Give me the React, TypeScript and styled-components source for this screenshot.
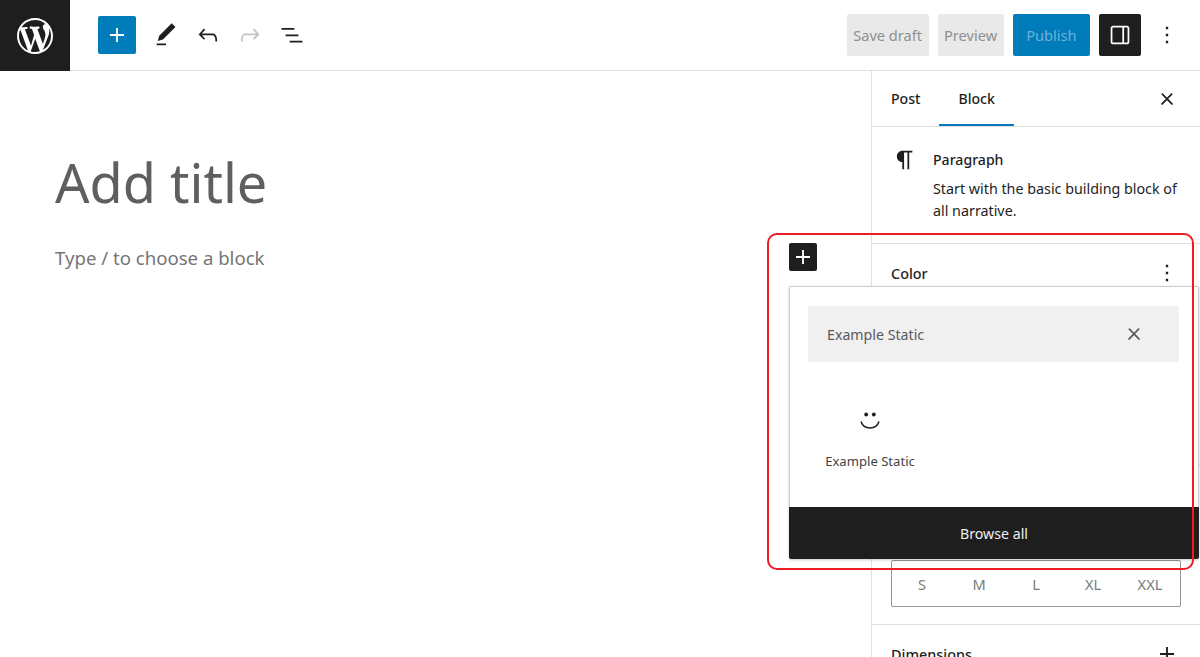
import styled, { createGlobalStyle } from "styled-components";

const GlobalStyle = createGlobalStyle`
  html, body {
    margin: 0;
    height: 100%;
    background: #fff;
  }
  body {
    font-family: "Noto Sans", "Open Sans", sans-serif;
    color: #1e1e1e;
    overflow: hidden;
  }
  * {
    box-sizing: border-box;
  }
`;

const Page = styled.div`
  position: relative;
  width: 1200px;
  height: 657px;
  overflow: hidden;
`;

const Header = styled.header`
  display: flex;
  align-items: center;
  height: 71px;
  border-bottom: 1px solid #e0e0e0;
`;

const Logo = styled.div`
  display: flex;
  align-items: center;
  justify-content: center;
  width: 70px;
  height: 71px;
  background: #1e1e1e;
  color: #fff;
  margin-bottom: -1px;
`;

const LeftTools = styled.div`
  display: flex;
  align-items: center;
  margin-left: 28px;
`;

const InserterButton = styled.div`
  display: flex;
  align-items: center;
  justify-content: center;
  width: 38px;
  height: 38px;
  margin-right: 9px;
  border-radius: 2px;
  background: #007cba;
  color: #fff;
`;

const ToolIcon = styled.div<{ $muted?: boolean }>`
  display: flex;
  align-items: center;
  justify-content: center;
  width: 42px;
  height: 42px;
  color: ${(p) => (p.$muted ? "#c4c4c4" : "#1e1e1e")};
`;

const RightTools = styled.div`
  display: flex;
  align-items: center;
  gap: 9px;
  margin-left: auto;
  padding-right: 19px;
`;

const ActionButton = styled.div<{ $primary?: boolean }>`
  display: flex;
  align-items: center;
  height: 42px;
  padding: 0 6.5px;
  border-radius: 2px;
  font-size: 14.6px;
  white-space: nowrap;
  background: ${(p) => (p.$primary ? "#007cba" : "#e9e9e9")};
  color: ${(p) => (p.$primary ? "#6eb1d8" : "#8f8f8f")};
`;

const PublishButton = styled(ActionButton)`
  padding: 0 13.5px;
`;

const SidebarToggle = styled.div`
  display: flex;
  align-items: center;
  justify-content: center;
  width: 42px;
  height: 42px;
  border-radius: 2px;
  background: #1e1e1e;
  color: #fff;
`;

const MoreButton = styled.div`
  display: flex;
  margin-left: 3px;
`;

const Body = styled.div`
  display: flex;
  height: 586px;
`;

const Editor = styled.main`
  flex: 1;
  padding: 78px 0 0 55px;
`;

const Title = styled.h1`
  margin: 0;
  height: 66px;
  font-size: 54px;
  line-height: 66px;
  font-weight: 400;
  color: #5f5f5f;
`;

const Placeholder = styled.p`
  margin: 30px 0 0;
  font-size: 18.6px;
  line-height: 26px;
  color: #757575;
`;

const Sidebar = styled.aside`
  width: 329px;
  border-left: 1px solid #e0e0e0;
`;

const Tabs = styled.div`
  display: flex;
  align-items: stretch;
  height: 56px;
  padding: 0 24px 0 19px;
  border-bottom: 1px solid #e0e0e0;
`;

const Tab = styled.div<{ $active?: boolean }>`
  display: flex;
  align-items: center;
  margin-right: ${(p) => (p.$active ? "0" : "18.5px")};
  padding: 0 ${(p) => (p.$active ? "19.5px" : "0")};
  font-size: 14.1px;
  font-weight: 500;
  box-shadow: ${(p) => (p.$active ? "inset 0 -2px 0 #007cba" : "none")};
`;

const TabClose = styled.div`
  display: flex;
  align-items: center;
  margin-left: auto;
`;

const BlockCard = styled.section`
  display: flex;
  height: 117px;
  padding: 22px 19px 0 19px;
  border-bottom: 1px solid #e0e0e0;
`;

const BlockIcon = styled.div`
  width: 42px;
  flex: none;
  margin-top: -3px;
`;

const BlockName = styled.div`
  font-size: 14.1px;
  font-weight: 500;
  line-height: 21px;
  margin-bottom: 8px;
`;

const BlockText = styled.div`
  font-size: 14.3px;
  line-height: 22px;
  white-space: nowrap;
`;

const Panel = styled.section<{ $height: number }>`
  height: ${(p) => p.$height}px;
  padding: 17px 19px;
  border-bottom: 1px solid #e0e0e0;
`;

const PanelHeader = styled.div`
  display: flex;
  align-items: center;
  justify-content: space-between;
  height: 24px;
  font-size: 14.4px;
  font-weight: 500;
`;

const SizeField = styled.div`
  display: grid;
  grid-template-columns: repeat(5, 57px);
  align-items: center;
  justify-items: center;
  height: 47px;
  margin-top: 54px;
  padding: 0 1.5px;
  border: 1px solid #949494;
  border-radius: 2px;
  font-size: 14.6px;
  color: #7a7a7a;
`;

const Inserter = styled.button`
  position: absolute;
  left: 789px;
  top: 243px;
  display: flex;
  align-items: center;
  justify-content: center;
  width: 28px;
  height: 28px;
  padding: 0;
  border: 0;
  border-radius: 2px;
  background: #1e1e1e;
  color: #fff;
`;

const Popover = styled.div`
  position: absolute;
  left: 789px;
  top: 286px;
  display: flex;
  flex-direction: column;
  width: 410px;
  height: 273px;
  border-radius: 2px;
  background: #fff;
  box-shadow: inset 0 0 0 1px #ccc, 0 1px 3px rgba(0, 0, 0, 0.2);
`;

const SearchBox = styled.div`
  display: flex;
  align-items: center;
  justify-content: space-between;
  height: 56px;
  margin: 20px 20px 0 19px;
  padding: 0 36px 0 19px;
  border-radius: 2px;
  background: #f0f0f0;
  font-size: 14.2px;
  color: #5a5a5a;
`;

const BlockItem = styled.div`
  display: flex;
  flex-direction: column;
  align-items: center;
  width: 122px;
  margin: 46px 0 0 20px;
  color: #444;
  font-size: 13.1px;
`;

const ItemLabel = styled.span`
  margin-top: 16px;
  white-space: nowrap;
`;

const BrowseAll = styled.div`
  display: flex;
  align-items: center;
  justify-content: center;
  height: 52px;
  margin-top: auto;
  border-radius: 0 0 2px 2px;
  background: #1e1e1e;
  color: #f0f0f0;
  font-size: 14.2px;
`;

const Highlight = styled.div`
  position: absolute;
  left: 767px;
  top: 233px;
  width: 427px;
  height: 337px;
  border: 2.5px solid #ed1c24;
  border-radius: 10px;
  pointer-events: none;
`;

const CloseIcon = styled.svg`
  stroke: currentColor;
  stroke-width: 1.1;
`;

const Icon = ({ d, size = 28 }: { d: string; size?: number }) => (
  <svg width={size} height={size} viewBox="0 0 24 24" fill="currentColor">
    <path fillRule="evenodd" d={d} />
  </svg>
);

const plus = "M18 11.2h-5.2V6h-1.6v5.2H6v1.6h5.2V18h1.6v-5.2H18z";
const pencil = "M20.1 5.1L16.9 2 6.2 12.7l-1.3 4.4 4.5-1.3L20.1 5.1zM4 20.8h8v-1.5H4v1.5z";
const undo =
  "M18.3 11.7c-.6-.6-1.4-.9-2.3-.9H6.7l2.9-3.3-1.1-1-4.5 5L8.5 16l1-1-2.7-2.7H16c.5 0 .9.2 1.3.5 1 1 1 3.4 1 4.5v.3h1.5v-.2c0-1.5 0-4.3-1.5-5.7z";
const redo =
  "M15.6 6.5l-1.1 1 2.9 3.3H8c-.9 0-1.7.3-2.3.9-1.4 1.5-1.4 4.2-1.4 5.6v.2h1.5v-.3c0-1.1 0-3.5 1-4.5.3-.3.7-.5 1.3-.5h9.2L14.5 15l1.1 1.1 4.6-4.6-4.6-5z";
const listView = "M3 6h11v1.5H3V6zm3.5 5.5h11V13h-11v-1.5zM21 17H10v1.5h11V17z";
const drawer =
  "M18 4H6c-1.1 0-2 .9-2 2v12c0 1.1.9 2 2 2h12c1.1 0 2-.9 2-2V6c0-1.1-.9-2-2-2zM5.5 18V6c0-.3.2-.5.5-.5h8v13H6c-.3 0-.5-.2-.5-.5zm13 0c0 .3-.2.5-.5.5h-2.5v-13H18c.3 0 .5.2.5.5v12z";
const more = "M13 19h-2v-2h2v2zm0-6h-2v-2h2v2zm0-6h-2V5h2v2z";
const close =
  "M13 11.8l6.1-6.3-1-1-6.1 6.2-6.1-6.2-1 1 6.1 6.3-6.5 6.7 1 1 6.5-6.6 6.5 6.6 1-1z";
const paragraph =
  "M18.3 4H9.9v-.1l-.9.2c-2.3.4-4 2.4-4 4.8s1.7 4.4 4 4.8l.7.1V20h1.5V5.5h2.9V20h1.5V5.5h2.7V4z";
const wordpress =
  "M20 10c0-5.51-4.49-10-10-10C4.48 0 0 4.49 0 10c0 5.52 4.48 10 10 10 5.51 0 10-4.48 10-10zM7.78 15.37L4.37 6.22c.55-.02 1.17-.08 1.17-.08.5-.06.44-1.13-.06-1.11 0 0-1.45.11-2.37.11-.18 0-.37 0-.58-.01C4.12 2.69 6.91 1.11 10 1.11c2.3 0 4.39.87 5.97 2.3-.67-.11-1.62.39-1.62 1.54 0 .71.43 1.31.87 2.02.35.61.55 1.36.55 2.46 0 1.49-1.4 5-1.4 5l-3.03-8.35c.54-.02.82-.17.82-.17.5-.05.44-1.25-.06-1.22 0 0-1.44.12-2.38.12-.87 0-2.33-.12-2.33-.12-.5-.03-.56 1.2-.06 1.22l.92.08 1.26 3.41zM17.41 10c.24-.64.74-1.87.43-4.25.7 1.29 1.05 2.71 1.05 4.25 0 3.29-1.73 6.24-4.48 7.78 1-2.67 2-5.36 3-7.78zM6.1 18.09C3.12 16.65 1.11 13.53 1.11 10c0-1.3.23-2.48.72-3.59C3.25 10.3 4.67 14.2 6.1 18.09zm4.03-6.63l2.58 6.98c-.86.29-1.74.45-2.71.45-.82 0-1.61-.11-2.37-.34.84-2.4 1.68-4.78 2.5-7.09z";

const Close = () => (
  <CloseIcon width="18" height="18" viewBox="0 0 24 24" fill="currentColor">
    <path d={close} />
  </CloseIcon>
);

const Smile = () => (
  <svg width="28" height="28" viewBox="0 0 28 28" fill="none">
    <circle cx="10.2" cy="6.5" r="1.9" fill="#1e1e1e" />
    <circle cx="17.8" cy="6.5" r="1.9" fill="#1e1e1e" />
    <path
      d="M5 13.5c1.3 4 4.8 6.500 9 6.500s7.700-2.500 9-6.500"
      stroke="#1e1e1e"
      strokeWidth="1.5"
    />
  </svg>
);

const sizes = ["S", "M", "L", "XL", "XXL"];

const App = () => (
  <Page>
    <GlobalStyle />
    <Header>
      <Logo>
        <svg width="36" height="36" viewBox="0 0 20 20" fill="currentColor">
          <path d={wordpress} />
        </svg>
      </Logo>
      <LeftTools>
        <InserterButton>
          <Icon d={plus} />
        </InserterButton>
        <ToolIcon>
          <Icon d={pencil} />
        </ToolIcon>
        <ToolIcon>
          <Icon d={undo} />
        </ToolIcon>
        <ToolIcon $muted>
          <Icon d={redo} />
        </ToolIcon>
        <ToolIcon>
          <Icon d={listView} />
        </ToolIcon>
      </LeftTools>
      <RightTools>
        <ActionButton>Save draft</ActionButton>
        <ActionButton>Preview</ActionButton>
        <PublishButton $primary>Publish</PublishButton>
        <SidebarToggle>
          <Icon d={drawer} />
        </SidebarToggle>
        <MoreButton>
          <Icon d={more} />
        </MoreButton>
      </RightTools>
    </Header>
    <Body>
      <Editor>
        <Title>Add title</Title>
        <Placeholder>Type / to choose a block</Placeholder>
      </Editor>
      <Sidebar>
        <Tabs>
          <Tab>Post</Tab>
          <Tab $active>Block</Tab>
          <TabClose>
            <Close />
          </TabClose>
        </Tabs>
        <BlockCard>
          <BlockIcon>
            <Icon d={paragraph} />
          </BlockIcon>
          <div>
            <BlockName>Paragraph</BlockName>
            <BlockText>
              Start with the basic building block of
              <br />
              all narrative.
            </BlockText>
          </div>
        </BlockCard>
        <Panel $height={221}>
          <PanelHeader>
            Color
            <Icon d={more} />
          </PanelHeader>
        </Panel>
        <Panel $height={160}>
          <PanelHeader>Typography</PanelHeader>
          <SizeField>
            {sizes.map((size) => (
              <span key={size}>{size}</span>
            ))}
          </SizeField>
        </Panel>
        <Panel $height={60}>
          <PanelHeader>
            Dimensions
            <Icon d={plus} />
          </PanelHeader>
        </Panel>
      </Sidebar>
    </Body>
    <Inserter>
      <Icon d={plus} />
    </Inserter>
    <Popover>
      <SearchBox>
        Example Static
        <Close />
      </SearchBox>
      <BlockItem>
        <Smile />
        <ItemLabel>Example Static</ItemLabel>
      </BlockItem>
      <BrowseAll>Browse all</BrowseAll>
    </Popover>
    <Highlight />
  </Page>
);

export default App;
